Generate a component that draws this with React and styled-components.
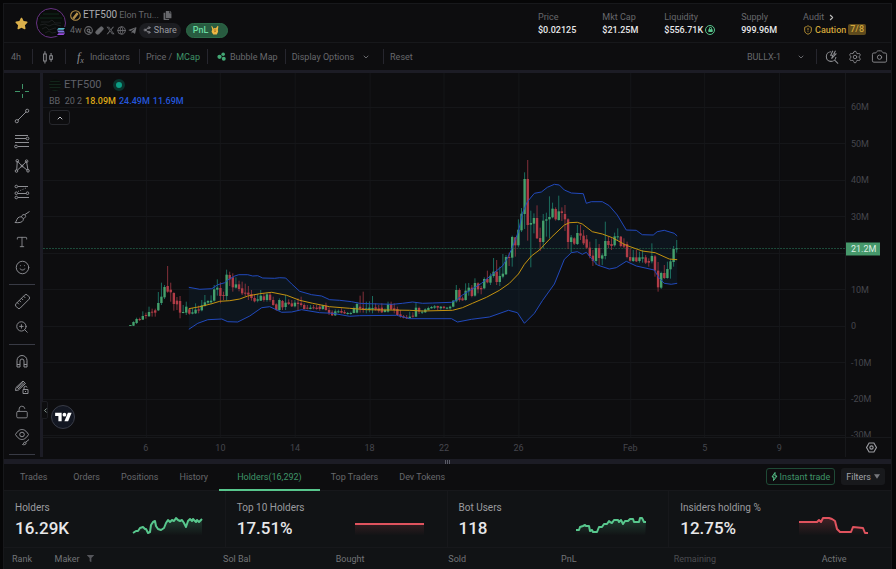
import React from "react";
import styled, { createGlobalStyle, css } from "styled-components";
import {
  Camera, ChevronDown, ChevronLeft, ChevronRight, ChevronUp, Globe,
  LockOpen, Pill, Ruler, Settings, Share2, ShieldAlert, Smile, Type, ZoomIn,
} from "lucide-react";
import { FaStar, FaTelegramPlane, FaFilter, FaCopy, FaLock } from "react-icons/fa";
import { FaXTwitter } from "react-icons/fa6";

const c = {
  page: "#060607",
  panel: "#0d0d0f",
  card: "#111315",
  line: "#17181b",
  bar: "#1c1c25",
  dim: "#67686c",
  faint: "#45464d",
  soft: "#9a9b9f",
  white: "#e8e8ea",
  green: "#3f9468",
  bright: "#58c78d",
  red: "#e0535e",
  gold: "#d2a63a",
};

const Global = createGlobalStyle`
  * { box-sizing: border-box; }
  body { margin: 0; background: ${c.page}; color: ${c.dim}; font: 9px/12px Roboto, "Liberation Sans", sans-serif; }
  button { font: inherit; color: inherit; background: none; border: 0; padding: 0; margin: 0; cursor: pointer; }
  a { color: inherit; text-decoration: none; display: inline-flex; }
  svg { display: block; flex: none; }
`;

const Page = styled.div`
  height: 100vh;
  min-height: 540px;
  padding: 3px 4px 0 3px;
  display: flex;
`;
const Shell = styled.div`
  flex: 1;
  min-width: 0;
  display: flex;
  flex-direction: column;
  background: ${c.panel};
  border: 1px solid ${c.line};
  border-bottom: 0;
  overflow: hidden;
`;

/* header */
const Header = styled.header`
  height: 39px;
  flex: none;
  display: flex;
  align-items: center;
  border-bottom: 1px solid ${c.line};
  padding: 0 25px 0 11px;
`;
const StarButton = styled.button`
  color: #dbb04b;
  margin-right: 8px;
`;
const Avatar = styled.div`
  position: relative;
  width: 30px;
  height: 30px;
  border-radius: 50%;
  border: 1px solid #673283;
  background: #090c0a;
`;
const ChainBadge = styled.span`
  position: absolute;
  right: -1px;
  bottom: 1px;
  padding: 1px;
  background: #0a0a0e;
`;
const TokenInfo = styled.div`
  margin-left: 4px;
  display: flex;
  flex-direction: column;
`;
const TokenLine = styled.div`
  display: flex;
  align-items: center;
  height: ${(p) => p.$h}px;
  gap: 2px;
`;
const Symbol = styled.strong`
  font-size: 10px;
  font-weight: 400;
  color: #aaabaf;
`;
const TokenName = styled.span`
  margin-right: 2px;
`;
const PillButton = styled.button`
  display: flex;
  align-items: center;
  gap: 3px;
  height: 15px;
  border-radius: 8px;
  padding: 0 4px;
  color: #9b9ca1;
  background: #1c1d21;
  ${(p) => p.$pnl && css`
    margin-left: 3px;
    padding: 0 8px 0 6px;
    color: #68dca2;
    font-weight: 500;
    background: #285b40;
    border: 1px solid #2d6b49;
  `}
`;
const Metrics = styled.dl`
  margin: 0 0 0 auto;
  display: flex;
  gap: 26px;
`;
const Metric = styled.div`
  display: flex;
  flex-direction: column;
`;
const MetricLabel = styled.dt`
  display: flex;
  align-items: center;
  gap: 3px;
  line-height: 13px;
`;
const MetricValue = styled.dd`
  margin: 0;
  display: flex;
  align-items: center;
  gap: 2px;
  line-height: 12px;
  height: 12px;
  font-weight: 500;
  color: ${(p) => (p.$gold ? c.gold : c.white)};
`;
const LockBadge = styled.span`
  display: grid;
  place-items: center;
  width: 10px;
  height: 10px;
  border-radius: 50%;
  border: 1px solid ${c.bright};
  color: ${c.bright};
`;
const Score = styled.span`
  padding: 0 2px;
  line-height: 11px;
  border-radius: 2px;
  background: #5f4b1d;
`;

/* toolbar */
const Toolbar = styled.nav`
  height: 27px;
  flex: none;
  display: flex;
  align-items: center;
  padding: 0 3px 0 7px;
`;
const ToolButton = styled.button`
  display: flex;
  align-items: center;
  gap: ${(p) => p.$gap || 4}px;
  white-space: nowrap;
  color: ${(p) => (p.$icon ? "#8b8c90" : "inherit")};
`;
const Divider = styled.span`
  width: 1px;
  height: 15px;
  margin: 0 ${(p) => p.$r || 6}px 0 ${(p) => p.$l || 7}px;
  background: #26262e;
`;
const Fx = styled.span`
  font: italic 12px/12px "Liberation Serif", serif;
  color: #8b8c90;
  sub { font-size: 8px; line-height: 0; vertical-align: -2px; }
`;
const Accent = styled.span`
  color: ${c.green};
`;
const RightTools = styled.div`
  margin-left: auto;
  display: flex;
  align-items: center;
`;
const IconGroup = styled.div`
  display: flex;
  align-items: center;
  gap: 9px;
`;
const Rail = styled.div`
  height: 3px;
  flex: none;
  background: ${c.bar};
`;

/* workspace */
const Workspace = styled.main`
  flex: 1;
  min-height: 0;
  display: flex;
`;
const Tools = styled.aside`
  width: 39px;
  flex: none;
  display: flex;
  flex-direction: column;
  padding-top: 5px;
  border-right: 3px solid ${c.bar};
  color: #8e8f94;
`;
const Tool = styled.button`
  flex: 1;
  min-height: 0;
  display: grid;
  place-items: center;
  color: ${(p) => (p.$active ? c.green : "inherit")};
`;
const MirroredRuler = styled(Ruler)`
  transform: scaleX(-1);
`;
const ToolRule = styled.hr`
  width: 26px;
  height: 1px;
  flex: none;
  margin: 4px auto;
  border: 0;
  background: #383a44;
  &:last-child { margin-bottom: 2px; }
`;
const Chart = styled.section`
  position: relative;
  flex: 1;
  min-width: 0;
  display: grid;
  grid-template-columns: minmax(0, 1fr) 46px;
  grid-template-rows: minmax(0, 1fr) 20px;
  color: ${c.faint};
`;
const Plot = styled.svg`
  width: 100%;
  height: 100%;
`;
const PriceAxis = styled.div`
  position: relative;
  overflow: hidden;
  border-left: 1px solid ${c.line};
  padding-left: 5px;
  display: grid;
  align-items: center;
  grid-template-rows: 158fr repeat(9, minmax(0, 365fr)) minmax(0, 197fr);
  span:last-of-type { align-self: end; margin-bottom: -4px; }
`;
const PriceTag = styled.output`
  position: absolute;
  left: 0;
  padding: 0 4px 0 5px;
  line-height: 13px;
  transform: translateY(-50%);
  color: #dcefe4;
  background: #46986b;
`;
const TimeAxis = styled.div`
  border-top: 1px solid ${c.line};
  display: grid;
  align-items: center;
  text-align: center;
  grid-template-columns: 657fr repeat(6, 746fr) 373fr repeat(3, 746fr) 284fr;
`;
const AxisCorner = styled.button`
  border-top: 1px solid ${c.line};
  border-left: 1px solid ${c.line};
  display: grid;
  place-items: center;
  padding-left: 5px;
  color: #9c9da2;
`;
const Legend = styled.div`
  position: absolute;
  left: 6px;
  top: 4px;
`;
const LegendTitle = styled.div`
  height: 15px;
  display: flex;
  align-items: center;
  gap: 3px;
  font-size: 11px;
  color: #5f6068;
`;
const TokenDot = styled.span`
  width: 12px;
  height: 12px;
  border-radius: 50%;
  background: repeating-linear-gradient(#0a0d0b 0 2px, #12251a 2px 3px);
`;
const LiveDot = styled.span`
  width: 12px;
  height: 12px;
  margin-left: 8px;
  border: 3px solid #0b332d;
  border-radius: 50%;
  background: #0d9d84;
`;
const LegendValues = styled.div`
  margin-top: 3px;
  height: 12px;
  display: flex;
  gap: 3px;
  color: #62636a;
`;
const Value = styled.span`
  font-weight: 500;
  color: ${(p) => p.$color};
`;
const Fold = styled.button`
  margin-top: 3px;
  display: grid;
  place-items: center;
  width: 21px;
  height: 15px;
  border: 1px solid #26272c;
  border-radius: 3px;
  color: #c2c3c7;
  background: ${c.panel};
`;
const Collapse = styled.button`
  position: absolute;
  left: -2px;
  bottom: 38px;
  width: 7px;
  height: 18px;
  display: grid;
  place-items: center;
  border: 1px solid #1c1d22;
  border-radius: 2px;
  color: #9fb5ab;
  background: ${c.panel};
`;
const TvMark = styled.a`
  position: absolute;
  left: 8px;
  bottom: 28px;
  width: 24px;
  height: 24px;
  align-items: center;
  justify-content: center;
  border: 1px solid #383b46;
  border-radius: 50%;
  background: #131722;
`;
const Splitter = styled.div`
  height: 5px;
  flex: none;
  margin-top: 2px;
  display: flex;
  justify-content: center;
  align-items: center;
  gap: 1px;
  background: ${c.bar};
`;
const Grip = styled.i`
  width: 1px;
  height: 4px;
  background: #5a5b66;
`;

/* lower panel */
const TabBar = styled.div`
  height: 27px;
  flex: none;
  display: flex;
  align-items: stretch;
  padding: 0 6px;
  border-bottom: 1px solid ${c.line};
`;
const Tab = styled.button`
  padding: 0 10px;
  margin-right: ${(p) => (p.$wide ? 6 : 1)}px;
  white-space: nowrap;
  ${(p) => p.$active && css`
    padding: 0 18px;
    color: ${c.green};
    box-shadow: 0 1px 0 ${c.bright}, inset 0 -1px 0 ${c.bright};
  `}
`;
const TabActions = styled.div`
  margin-left: auto;
  display: flex;
  align-items: center;
  gap: 6px;
  padding-bottom: 1px;
`;
const ActionButton = styled.button`
  display: flex;
  align-items: center;
  gap: 3px;
  height: 17px;
  padding: 0 5px;
  border-radius: 3px;
  color: #a3a4a8;
  background: #18191c;
  ${(p) => p.$outline && css`
    gap: 2px;
    padding: 0 4px;
    color: ${c.green};
    background: none;
    border: 1px solid #1f4a36;
  `}
`;
const Cards = styled.div`
  flex: none;
  display: grid;
  grid-template-columns: repeat(4, 1fr);
  background: ${c.card};
`;
const Card = styled.article`
  height: 56px;
  padding: 10px 22px 8px 11px;
  display: flex;
  justify-content: space-between;
  align-items: flex-start;
  border-right: 1px solid ${c.line};
  &:last-child { border-right: 0; }
`;
const CardTitle = styled.h3`
  margin: 0;
  font-size: 10px;
  line-height: 13px;
  font-weight: 400;
  color: ${c.soft};
`;
const CardValue = styled.p`
  margin: 4px 0 0;
  font-size: 17px;
  line-height: 20px;
  font-weight: 500;
  color: ${c.white};
`;
const Spark = styled.svg`
  margin-top: 13px;
`;
const Table = styled.table`
  flex: none;
  width: 100%;
  height: 22px;
  border-collapse: collapse;
  table-layout: fixed;
  background: ${c.card};
  border-top: 1px solid ${c.line};
`;
const Th = styled.th`
  padding: 0;
  text-align: left;
  font-weight: 400;
  width: ${(p) => p.$w}%;
  padding-left: ${(p) => p.$pad || 0}px;
  color: ${(p) => (p.$tone ? p.$tone : "#727377")};
`;
const ThInner = styled.span`
  display: flex;
  align-items: center;
  gap: 7px;
  svg { color: #55565b; }
`;

/* Candles: direction, then high, body top, body bottom, low, in thirds of a plot unit below 250. */
const CANDLES = `g 225 225 227 227|g 214 216 227 228|g 203 207 219 222|r 203 207 210 213|g 184 198 209 210|r 188 195 198 206|g 170 186 199 200|r 176 185 188 200|r 176 181 188 200|g 126 159 181 183|g 98 140 159 165|g 105 111 142 147|r 48 108 125 128|r 98 119 127 155|r 127 129 162 182|r 141 152 163 180|r 138 153 188 205|g 165 186 188 190|g 155 170 188 195|r 175 178 191 194|g 174 187 191 193|g 160 179 190 192|r 167 178 182 190|g 150 166 181 184|g 135 157 168 170|g 150 153 158 162|g 136 152 157 163|g 105 118 152 155|g 88 113 119 137|r 97 114 138 160|r 125 135 138 150|g 59 74 138 152|r 65 75 88 108|r 70 82 112 125|g 82 103 113 116|r 92 103 117 124|r 95 115 130 135|r 101 128 131 138|r 108 128 134 150|r 120 132 144 152|r 132 144 154 157|g 132 148 152 157|g 120 137 152 153|r 130 139 150 155|g 128 133 150 155|r 129 134 150 155|r 140 150 165 167|r 160 163 180 182|g 145 150 180 182|r 150 153 172 180|g 135 158 171 180|r 148 157 162 165|r 150 160 169 171|g 150 158 169 172|r 145 158 162 182|r 140 160 165 170|r 160 165 177 178|r 165 173 176 178|g 165 173 177 178|r 165 172 175 178|r 165 173 177 179|r 164 170 177 182|g 164 166 177 180|r 158 167 180 182|r 172 180 189 195|r 181 187 196 198|g 178 184 196 198|g 179 184 187 189|r 175 183 188 190|r 180 186 190 192|g 186 189 192 194|g 185 189 192 194|g 170 174 189 190|g 157 162 188 190|r 137 170 176 188|r 125 174 178 188|g 155 175 178 190|g 154 173 180 187|g 138 174 177 190|r 160 172 178 182|r 165 175 182 188|r 160 173 187 189|g 175 180 186 188|g 155 163 185 188|r 155 162 178 180|r 160 175 180 190|r 170 177 195 198|r 180 193 199 203|r 195 199 203 205|r 195 202 205 207|g 185 200 204 207|r 187 197 200 203|g 157 173 200 201|r 170 174 185 192|g 180 185 188 192|g 175 178 187 189|g 170 174 180 181|g 168 171 175 176|g 165 169 173 177|r 167 168 173 180|g 168 170 175 180|r 168 170 174 178|g 171 173 176 178|g 167 170 175 179|g 150 152 170 172|g 105 120 154 158|r 115 120 150 155|r 140 145 151 152|g 100 122 150 152|g 99 113 124 137|r 105 113 138 142|g 85 99 137 140|r 97 100 118 130|r 108 114 118 133|g 82 87 115 118|r 62 87 97 100|g 70 77 98 105|g 24 65 78 83|r 30 65 96 105|g 50 78 96 108|g 12 71 80 85|g 15 21 73 75|r 8 21 24 48|g -43 -39 23 50|r -39 -38 -14 20|g -92 -61 -14 -8|g -126 -109 -59 -54|g -233 -213 -108 -63|r -270 -213 -75 -28|g -118 -81 -76 52|g -110 -96 -79 -50|r -134 -96 -35 -33|r -67 -36 -24 3|g -108 -88 -24 -5|g -112 -92 -88 -40|g -161 -99 -92 -35|g -142 -124 -98 -95|r -128 -123 -92 -88|g -163 -116 -90 -88|r -128 -116 -111 -87|r -135 -108 -92 -57|r -95 -92 -24 -3|g -45 -38 -24 8|r -38 -35 -19 -15|g -75 -51 -18 -15|r -75 -50 -43 -30|r -60 -43 -20 -15|r -45 -32 -7 -3|r -25 -7 18 25|r 0 17 33 48|g -33 -6 33 45|r -18 -6 24 48|g 10 16 26 45|g -85 -27 18 28|r -40 -27 -15 -5|r -35 -18 -12 0|g -52 -41 -14 -10|g -65 -41 -38 -30|r -42 -40 -12 -8|r -35 -18 -10 -5|r -25 -18 21 25|r -5 21 32 35|g 0 22 33 36|r 0 22 34 36|g 5 22 33 38|g 0 22 26 38|r 15 22 38 42|r 25 33 38 50|g -20 18 34 40|r 15 19 62 80|r 36 62 112 125|g 65 69 113 117|r 45 69 84 87|g 35 57 84 86|g 28 34 58 86|g -12 -3 36 50|g -30 -5 -2 8`
  .split("|")
  .map((row) => {
    const [dir, ...v] = row.split(" ");
    return [dir, ...v.map(Number)];
  });

const UPPER = [[189, 112], [200, 118], [212, 116], [218, 104], [225, 98], [228, 90], [235, 78], [239, 74], [248, 74], [253, 78], [258, 77], [263, 84], [275, 85], [280, 83], [286, 84], [292, 102], [300, 124], [312, 134], [322, 138], [330, 149], [340, 151], [352, 155], [360, 160], [370, 161], [393, 163], [403, 160], [413, 156], [423, 160], [433, 159], [452, 157], [457, 150], [463, 135], [470, 122], [482, 100], [490, 80], [500, 55], [503, 48], [508, 25], [513, -8], [519, -55], [523, -110], [528, -145], [535, -170], [542, -174], [548, -188], [555, -197], [560, -195], [565, -180], [572, -171], [584, -169], [587, -140], [592, -145], [603, -145], [610, -133], [618, -105], [627, -60], [637, -59], [643, -46], [654, -45], [658, -55], [665, -59], [675, -50], [678, -42]];
const MIDDLE = [[189, 176], [200, 170], [212, 161], [220, 154], [230, 152], [240, 147], [248, 138], [260, 131], [272, 127], [287, 136], [300, 151], [313, 160], [330, 170], [350, 175], [367, 179], [390, 180], [410, 181], [423, 183], [453, 181], [463, 173], [473, 160], [487, 142], [500, 121], [510, 100], [519, 72], [525, 43], [532, 18], [540, 0], [552, -38], [565, -75], [570, -82], [578, -83], [583, -78], [593, -55], [603, -48], [613, -37], [627, -14], [643, 3], [656, 8], [670, 27], [678, 29]];
const LOWER = [[189, 238], [198, 220], [208, 209], [222, 207], [228, 215], [238, 216], [250, 198], [262, 173], [270, 170], [282, 187], [292, 186], [302, 179], [320, 188], [333, 190], [350, 199], [360, 197], [397, 196], [410, 206], [452, 206], [458, 216], [472, 208], [490, 201], [509, 181], [518, 188], [525, 220], [535, 190], [543, 152], [555, 102], [565, 28], [572, 8], [578, 5], [583, 13], [587, 7], [592, 25], [598, 45], [610, 57], [617, 53], [627, 34], [637, 48], [655, 60], [660, 85], [665, 100], [672, 103], [678, 100]];

const level = (v) => 250 + v / 3;
const line = (pts) => pts.map(([x, v]) => `${x},${level(v).toFixed(1)}`).join(" ");

const PRICES = [60, 50, 40, 30, 20, 10, 0, -10, -20, -30];
const GRID_X = [146, 220, 295, 370, 444, 519, 631, 705, 780];
const TAG_TOP = ((248.5 - 73) / 364) * 100;

function PricePlot() {
  return (
    <Plot viewBox="43 73 803 364" preserveAspectRatio="none" role="img" aria-label="ETF500 market cap, 4h candles">
      <g stroke="#151619">
        {GRID_X.map((x) => <path key={x} d={`M${x + 0.5} 73V437`} />)}
        {PRICES.map((p) => <path key={p} d={`M43 ${Math.round(325.8 - p * 3.65) + 0.5}H846`} />)}
      </g>
      <polygon points={`${line(UPPER)} ${line([...LOWER].reverse())}`} fill="#10324a" fillOpacity="0.24" />
      <path d="M43 248.5H846" stroke="#1d4b3b" strokeDasharray="2 1" />
      {CANDLES.map(([dir, hi, top, bottom, lo], i) => {
        const x = 130.5 + i * 3.108;
        const up = dir === "g";
        return (
          <g key={i}>
            <path d={`M${x} ${level(hi)}V${level(lo)}`} stroke={up ? "#1b6c5e" : "#84303a"} />
            <rect x={x - 1.2} y={level(top)} width="2.4" height={Math.max(1, (bottom - top) / 3)} fill={up ? "#44a06c" : "#b03c47"} />
          </g>
        );
      })}
      <g fill="none" strokeLinejoin="round">
        <polyline points={line(UPPER)} stroke="#2149bd" />
        <polyline points={line(LOWER)} stroke="#2149bd" />
        <polyline points={line(MIDDLE)} stroke="#c5930f" />
      </g>
    </Plot>
  );
}

const Glyph = ({ size = 16, children, ...rest }) => (
  <svg width={size} height={size} viewBox="0 0 16 16" fill="none" stroke="currentColor" aria-hidden="true" {...rest}>
    {children}
  </svg>
);
const CrosshairIcon = () => <Glyph><path d="M1 8.5h5M11 8.5h4M8.5 1v5M8.5 11v4" /></Glyph>;
const TrendIcon = () => (
  <Glyph><circle cx="2.8" cy="13.2" r="1.6" /><circle cx="13.2" cy="2.8" r="1.6" /><path d="M4 12 12 4" /></Glyph>
);
const FibIcon = () => (
  <Glyph><path d="M1 2.5h13M1 5.5h11M1 9.5h14M4 13.5h11" /><circle cx="13.5" cy="5.5" r="1.4" /><circle cx="2" cy="13.5" r="1.4" /></Glyph>
);
const PatternIcon = () => (
  <Glyph>
    <path d="M2.7 12.3 3.3 3 8 8l4.5-4.700L14 12.300M3.500 12 8 8l5 4" />
    <circle cx="3.3" cy="2.8" r="1.3" /><circle cx="2.5" cy="13" r="1.3" /><circle cx="8" cy="8" r="1" />
    <circle cx="12.6" cy="3.2" r="1.3" /><circle cx="14" cy="12.8" r="1.3" />
  </Glyph>
);
const ForecastIcon = () => (
  <Glyph>
    <path d="M4 2.5h10M4 9.5h8M4 13.5h11" /><path d="M4 7.5 12 4" strokeDasharray="1 1.5" />
    <circle cx="2.3" cy="2.5" r="1.3" /><circle cx="2.3" cy="9.2" r="1.3" /><circle cx="2.3" cy="13.5" r="1.3" /><circle cx="13.5" cy="9.2" r="1.3" />
  </Glyph>
);
const BrushIcon = () => (
  <Glyph><path d="M1 13.500c2-1 1.500-5 4.500-5.500s4.500 1.500 3.500 3.500S5 14 1 13.500ZM7 8c1.500-2.500 2.500-3 4-2s.5 2.500-2 4M11 5.500 15.500 2.500" /></Glyph>
);
const MagnetIcon = () => (
  <Glyph><path d="M3 14V7.500a5 5 0 0 1 10 0V14h-3V8a2 2 0 0 0-4 0v6H3ZM3 11.500h3M10 11.500h3" /></Glyph>
);
const CandleIcon = () => (
  <Glyph size={14}><path d="M3 4.500h3v8H3zM4.500 1.500v3M4.500 12.500v3M10 6.500h3v4h-3zM11.500 3.500v3M11.500 10.500v3" strokeWidth="1.200" /></Glyph>
);
const PencilLockIcon = () => (
  <Glyph>
    <path d="m1.500 11.500.5-3L9 2l2.500 2.500-7 6.500-3 .5ZM3 9l6-5.500M4 10l6.500-6M9 10.500h5v4H9zM10 10.500V9a1.500 1.500 0 0 1 3-.5M11.500 12v1" />
  </Glyph>
);
const EyeBrushIcon = () => (
  <svg width="16" height="18" viewBox="0 0 16 18" fill="none" stroke="currentColor" aria-hidden="true">
    <path d="M1.500 6.500C4 2.500 6 1.500 8 1.500s4 1 6.500 5c-2.500 4-4.500 5-6.500 5s-4-1-6.500-5Z" /><circle cx="8" cy="6.500" r="2.300" />
    <path d="M8.500 16.500c1.500-.5 1-2.500 2.500-2.500s1.500 2 0 2.500-1.500.2-2.500 0ZM12 14l3-2.500" />
  </svg>
);
const HexIcon = () => (
  <Glyph size={11} strokeWidth="1.6"><path d="M4.500 1.500h7L15.200 8l-3.700 6.500h-7L.8 8Z" /><circle cx="8" cy="8" r="2.400" /></Glyph>
);
const QuickSearchIcon = () => (
  <Glyph size={14}><path d="M7 2a5.500 5.500 0 1 0 5.500 6M11 11.500l4 4M9 .8 6.500 6H9L7.500 10l5-5.500H10L12 .8" strokeWidth="1.200" /></Glyph>
);
const CoinIcon = () => (
  <Glyph size={11} stroke="#b8924a" strokeWidth="1.500"><circle cx="8" cy="8" r="7" /><path d="m4.500 11.500 5.500-7 1.500 1.500-5.500 6.500Z" fill="#b8924a" /></Glyph>
);
const ScanIcon = () => (
  <Glyph size={9} strokeWidth="2"><circle cx="8" cy="8" r="6.800" /><circle cx="8" cy="8" r="2.500" /><path d="M8 11.500h5" /></Glyph>
);
const SolIcon = () => (
  <svg width="8" height="7" viewBox="0 0 8 7" aria-hidden="true">
    <path d="M1.500 0H8L6.500 1.800H0Z" fill="#58b7c7" /><path d="M0 2.600h6.500L8 4.400H1.500Z" fill="#7d74dc" /><path d="M1.500 5.200H8L6.500 7H0Z" fill="#9b4be0" />
  </svg>
);
const CoinArt = () => (
  <svg width="28" height="28" viewBox="0 0 28 28" fill="none" aria-hidden="true">
    <path d="M6 5h16M3 9h22" stroke="#10291a" />
    <path d="M4 13h8l3-2 3 3h6M3 16l5-1 4 2 5-2 7 2M5 20l4-2 3 3 6-2 5 1M8 24l4-2 3 2 5-1" stroke="#1d1f20" />
  </svg>
);
const HandIcon = () => (
  <svg width="8" height="10" viewBox="0 0 9 11" aria-hidden="true">
    <path d="M1 .8 3 4l1-.8 1.500.2L7.500.8l.8.5-.6 4.200.3 2L6.500 10.500h-4L.6 7.500l.8-2.600L.4 1.200Z" fill="#eeb845" /><path d="M3 5.500h3M3.500 7.500l2-.5" stroke="#a86c1c" />
  </svg>
);
const BubblesIcon = () => (
  <Glyph size={9} stroke="none" fill="#43a774"><circle cx="11" cy="4" r="3.200" /><circle cx="4.500" cy="8.500" r="3.800" /><circle cx="12" cy="12" r="3.500" /></Glyph>
);
const BoltIcon = () => (
  <svg width="7" height="9" viewBox="0 0 14 18" fill="none" stroke={c.bright} strokeWidth="2" aria-hidden="true"><path d="M8 1 2 10h4l-1 7 7-9H8Z" /></svg>
);
const Caret = () => <svg width="6" height="5" viewBox="0 0 7 5" aria-hidden="true"><path d="M0 0h7L3.500 5Z" fill="#77787d" /></svg>;

const TOOL_GROUPS = [
  [
    ["Crosshair", <CrosshairIcon />], ["Trend line", <TrendIcon />], ["Fib retracement", <FibIcon />],
    ["Pattern", <PatternIcon />], ["Forecast", <ForecastIcon />], ["Brush", <BrushIcon />],
    ["Text", <Type size={14} strokeWidth={1.5} />], ["Emoji", <Smile size={15} strokeWidth={1.5} />],
  ],
  [["Measure", <MirroredRuler size={17} strokeWidth={1.4} />], ["Zoom in", <ZoomIn size={14} strokeWidth={1.6} />]],
  [
    ["Magnet", <MagnetIcon />], ["Stay in drawing mode", <PencilLockIcon />],
    ["Lock drawings", <LockOpen size={14} strokeWidth={1.5} />], ["Hide drawings", <EyeBrushIcon />],
  ],
];

const TABS = [["Trades", true], ["Orders"], ["Positions"], ["History"], ["Holders(16,292)"], ["Top Traders"], ["Dev Tokens"]];

const CARDS = [
  { title: "Holders", value: "16.29K", color: c.bright, id: "holders", pts: "1,19 4,17 6,17 8,14 11,13 13,15 14,15 16,19 18,18 19,11 21,8 23,7 24,12 26,15 29,16 32,14 34,9 36,6 38,8 40,6 42,7 44,4 46,6 48,7 50,6 52,9 54,13 56,7 58,5 60,7 61,5 64,8 65,6 67,8 70,5" },
  { title: "Top 10 Holders", value: "17.51%", color: c.red, id: "top", pts: "1,10 70,10" },
  { title: "Bot Users", value: "118", color: c.bright, id: "bots", pts: "1,16 4,16 5,13 8,12 10,11 11,12 14,12 15,17 17,16 18,18 22,18 24,13 27,13 29,10 32,10 34,7 35,8 37,9 39,6 43,6 44,8 46,6 48,10 50,7 53,7 55,5 58,5 59,8 62,8 64,8 65,4 67,4 69,8 71,8" },
  { title: "Insiders holding %", value: "12.75%", color: c.red, id: "insiders", pts: "1,8 19,8 21,6 23,8 25,4 31,4 34,5 37,7 39,15 42,18 53,18 55,13 65,14 67,19 70,19" },
];

const COLUMNS = [
  ["Rank", 5.7, null, 8], ["Maker", 19], ["Sol Bal", 12.7], ["Bought", 12.7], ["Sold", 12.7],
  ["PnL", 12.7], ["Remaining", 16.7, "#4b4c50"], ["Active", 7.8],
];

export default function App() {
  return (
    <>
      <Global />
      <Page>
        <Shell>
          <Header>
            <StarButton aria-label="Favorite"><FaStar size={13} /></StarButton>
            <Avatar><CoinArt /><ChainBadge><SolIcon /></ChainBadge></Avatar>
            <TokenInfo>
              <TokenLine $h={14}>
                <CoinIcon />
                <Symbol>ETF500</Symbol>
                <TokenName>Elon Tru...</TokenName>
                <FaCopy size={9} />
              </TokenLine>
              <TokenLine $h={16}>
                <span>4w</span>
                <ScanIcon />
                <Pill size={9} fill="currentColor" />
                <a href="#x" aria-label="X"><FaXTwitter size={9} /></a>
                <a href="#site" aria-label="Website"><Globe size={9} strokeWidth={2.5} /></a>
                <a href="#telegram" aria-label="Telegram"><FaTelegramPlane size={9} /></a>
                <PillButton><Share2 size={8} />Share</PillButton>
                <PillButton $pnl>PnL <HandIcon /></PillButton>
              </TokenLine>
            </TokenInfo>
            <Metrics>
              <Metric><MetricLabel>Price</MetricLabel><MetricValue>$0.02125</MetricValue></Metric>
              <Metric><MetricLabel>Mkt Cap</MetricLabel><MetricValue>$21.25M</MetricValue></Metric>
              <Metric>
                <MetricLabel>Liquidity</MetricLabel>
                <MetricValue>$556.71K <LockBadge><FaLock size={5} /></LockBadge></MetricValue>
              </Metric>
              <Metric><MetricLabel>Supply</MetricLabel><MetricValue>999.96M</MetricValue></Metric>
              <Metric>
                <MetricLabel>Audit <ChevronRight size={9} color="#bbb" strokeWidth={3} /></MetricLabel>
                <MetricValue $gold><ShieldAlert size={10} />Caution <Score>7/8</Score></MetricValue>
              </Metric>
            </Metrics>
          </Header>

          <Toolbar>
            <ToolButton>4h</ToolButton>
            <Divider $l={11} $r={8} />
            <ToolButton $icon aria-label="Chart style"><CandleIcon /></ToolButton>
            <Divider $l={10} $r={11} />
            <ToolButton $gap={6}><Fx>f<sub>x</sub></Fx>Indicators</ToolButton>
            <Divider $l={9} />
            <ToolButton>Price / <Accent>MCap</Accent></ToolButton>
            <Divider $r={9} />
            <ToolButton>
              <BubblesIcon />Bubble Map
            </ToolButton>
            <Divider />
            <ToolButton $gap={8}>Display Options <ChevronDown size={8} strokeWidth={3} /></ToolButton>
            <Divider $l={13} />
            <ToolButton>Reset</ToolButton>
            <RightTools>
              <ToolButton $gap={16}>BULLX-1 <ChevronDown size={8} strokeWidth={3} /></ToolButton>
              <Divider $l={11} $r={8} />
              <IconGroup>
                <ToolButton $icon aria-label="Quick search"><QuickSearchIcon /></ToolButton>
                <ToolButton $icon aria-label="Settings"><Settings size={14} strokeWidth={1.5} /></ToolButton>
                <ToolButton $icon aria-label="Snapshot"><Camera size={17} strokeWidth={1.3} /></ToolButton>
              </IconGroup>
            </RightTools>
          </Toolbar>
          <Rail />

          <Workspace>
            <Tools>
              {TOOL_GROUPS.map((group, g) => (
                <React.Fragment key={g}>
                  {group.map(([name, icon], i) => (
                    <Tool key={name} aria-label={name} $active={g === 0 && i === 0}>{icon}</Tool>
                  ))}
                  <ToolRule />
                </React.Fragment>
              ))}
            </Tools>
            <Chart>
              <PricePlot />
              <PriceAxis>
                <i />
                {PRICES.map((p) => <span key={p}>{p === 20 ? "" : p === 0 ? "0" : `${p}M`}</span>)}
                <PriceTag style={{ top: `${TAG_TOP}%` }}>21.2M</PriceTag>
              </PriceAxis>
              <TimeAxis>
                <i />
                {["6", "10", "14", "18", "22", "26"].map((t) => <span key={t}>{t}</span>)}
                <i />
                {["Feb", "5", "9"].map((t) => <span key={t}>{t}</span>)}
              </TimeAxis>
              <AxisCorner aria-label="Axis settings"><HexIcon /></AxisCorner>
              <Legend>
                <LegendTitle><TokenDot />ETF500<LiveDot /></LegendTitle>
                <LegendValues>
                  <span>BB&nbsp; 20 2</span>
                  <Value $color="#dfa816">18.09M</Value>
                  <Value $color="#2456dc">24.49M</Value>
                  <Value $color="#2456dc">11.69M</Value>
                </LegendValues>
                <Fold aria-label="Hide indicators"><ChevronUp size={8} strokeWidth={3} /></Fold>
              </Legend>
              <Collapse aria-label="Collapse tools"><ChevronLeft size={7} strokeWidth={3} /></Collapse>
              <TvMark href="#tradingview" aria-label="TradingView">
                <svg width="17" height="13" viewBox="0 0 36 28" fill="#fff" aria-hidden="true">
                  <path d="M14 22H7V11H0V4h14v18ZM28 22h-8l7.500-18h8L28 22Z" /><circle cx="20" cy="8" r="4" />
                </svg>
              </TvMark>
            </Chart>
          </Workspace>
          <Splitter><Grip /><Grip /><Grip /></Splitter>

          <TabBar>
            {TABS.map(([name, wide], i) => <Tab key={name} $wide={wide} $active={i === 4}>{name}</Tab>)}
            <TabActions>
              <ActionButton $outline><BoltIcon />Instant trade</ActionButton>
              <ActionButton>Filters <Caret /></ActionButton>
            </TabActions>
          </TabBar>
          <Cards>
            {CARDS.map((card) => (
              <Card key={card.id}>
                <div>
                  <CardTitle>{card.title}</CardTitle>
                  <CardValue>{card.value}</CardValue>
                </div>
                <Spark width="71" height="24" viewBox="0 0 71 24" fill="none" aria-hidden="true">
                  <defs>
                    <linearGradient id={card.id} x1="0" y1="0" x2="0" y2="24" gradientUnits="userSpaceOnUse">
                      <stop offset="0.2" stopColor={card.color} stopOpacity="0.22" />
                      <stop offset="0.9" stopColor={card.color} stopOpacity="0" />
                    </linearGradient>
                  </defs>
                  <polygon points={`1,24 ${card.pts} 70,24`} fill={`url(#${card.id})`} />
                  <polyline points={card.pts} stroke={card.color} strokeWidth="2" strokeLinejoin="round" />
                </Spark>
              </Card>
            ))}
          </Cards>
          <Table>
            <thead>
              <tr>
                {COLUMNS.map(([name, w, tone, pad]) => (
                  <Th key={name} scope="col" $w={w} $tone={tone} $pad={pad}>
                    <ThInner>{name}{name === "Maker" && <FaFilter size={7} />}</ThInner>
                  </Th>
                ))}
              </tr>
            </thead>
          </Table>
        </Shell>
      </Page>
    </>
  );
}
